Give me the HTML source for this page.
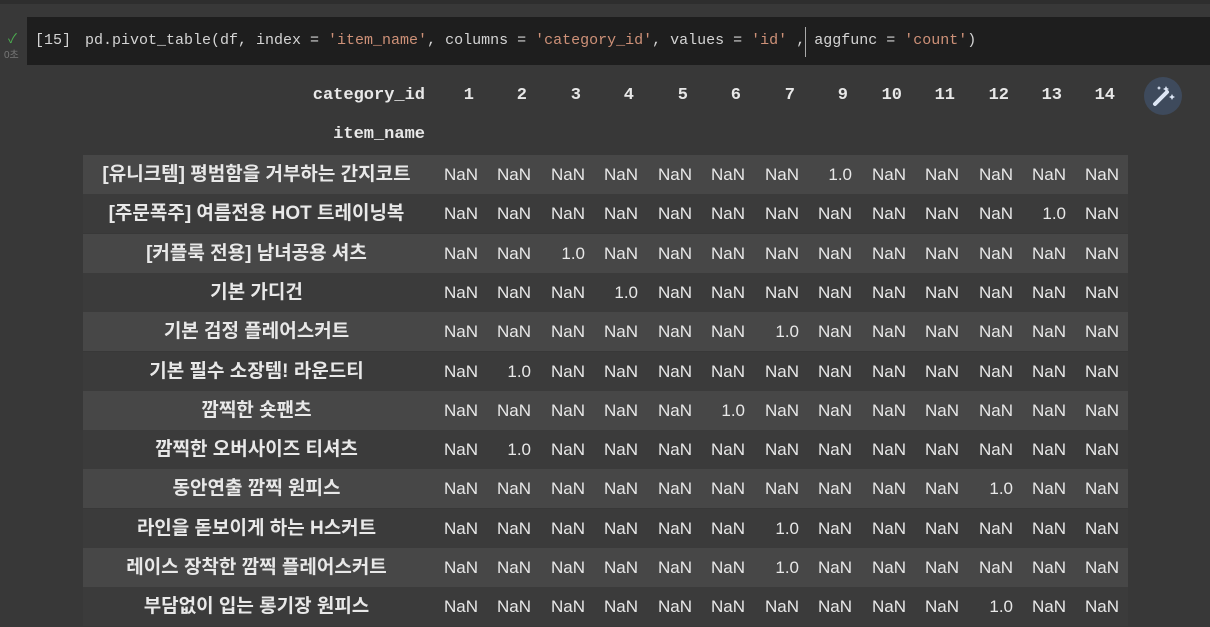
<!DOCTYPE html>
<html><head><meta charset="utf-8"><style>
body{margin:0;width:1210px;height:627px;background:#383838;overflow:hidden;position:relative;font-family:"Liberation Sans","Noto Sans CJK KR",sans-serif;color:#e8e8e8}
.top{position:absolute;left:0;top:0;width:1210px;height:4px;background:#2e2e2e}
.codebg{position:absolute;left:27px;top:17px;width:1183px;height:48px;background:#1e1e1e}
.code{position:absolute;top:17px;font-family:"Liberation Mono","Noto Sans CJK KR",monospace;font-size:15px;color:#d4d4d4;line-height:48px;white-space:pre}
.s{color:#ce9178}
.cur{position:absolute;left:805px;top:27px;width:1px;height:30px;background:#aaa}
.chk{position:absolute;left:8px;top:28px;color:#4caf50;font-size:13px}
.sec{position:absolute;left:4px;top:46px;color:#777;font-size:10px}
.row{position:absolute;left:83px;width:1045px;height:39px}
.odd{background:#474747}.even{background:#3b3b3b}
.c{position:absolute;font-size:17px;line-height:39px;text-align:right}
.idx{position:absolute;left:83px;width:347px;text-align:center;font-weight:bold;font-size:19px;line-height:39px;white-space:nowrap}
.h{position:absolute;font-family:"Liberation Mono",monospace;font-size:17px;text-align:right;font-weight:bold}
.magic{position:absolute;left:1144px;top:77px;width:38px;height:38px;border-radius:50%;background:#3e4a5c}
</style></head><body>
<div class="top"></div>
<div class="chk">✓</div><div class="sec">0초</div>
<div class="codebg"></div>
<div class="code" style="left:35px">[15]</div>
<div class="code" style="left:85px">pd.pivot_table(df, index = <span class="s">'item_name'</span>, columns = <span class="s">'category_id'</span>, values = <span class="s">'id'</span> , aggfunc = <span class="s">'count'</span>)</div>
<div class="cur"></div>
<div class="magic"><svg width="38" height="38" viewBox="0 0 38 38"><path d="M11 27 L23 15" stroke="#dde6f5" stroke-width="4" stroke-linecap="round"/><path d="M22 9l1 2 2 1-2 1-1 2-1-2-2-1 2-1z M28 17l1 2 2 1-2 1-1 2-1-2-2-1 2-1z M15 9l.7 1.3 1.3.7-1.3.7-.7 1.3-.7-1.3-1.3-.7 1.3-.7z" fill="#dde6f5"/></svg></div>
<div id="t"></div>
<script>
const names=["[유니크템] 평범함을 거부하는 간지코트","[주문폭주] 여름전용 HOT 트레이닝복","[커플룩 전용] 남녀공용 셔츠","기본 가디건","기본 검정 플레어스커트","기본 필수 소장템! 라운드티","깜찍한 숏팬츠","깜찍한 오버사이즈 티셔츠","동안연출 깜찍 원피스","라인을 돋보이게 하는 H스커트","레이스 장착한 깜찍 플레어스커트","부담없이 입는 롱기장 원피스"];
const ones=[7,11,2,3,6,1,5,1,10,6,6,10];
const cols=["1","2","3","4","5","6","7","9","10","11","12","13","14"];
const rights=[478,531,585,638,692,745,799,852,906,959,1013,1066,1119];
let h="";
h+=`<div class="h" style="right:${1210-425}px;top:86px">category_id</div><div class="h" style="right:${1210-425}px;top:125px">item_name</div>`;
cols.forEach((c,i)=>h+=`<div class="h" style="right:${1210-rights[i]+4}px;top:86px">${c}</div>`);
names.forEach((n,r)=>{const y=155+r*39.3;
h+=`<div class="row ${r%2?'even':'odd'}" style="top:${y}px"></div><div class="idx" style="top:${y}px">${n}</div>`;
rights.forEach((x,i)=>h+=`<div class="c" style="right:${1210-x}px;top:${y}px">${i==ones[r]?'1.0':'NaN'}</div>`);});
document.getElementById('t').innerHTML=h;
</script>
</body></html>
